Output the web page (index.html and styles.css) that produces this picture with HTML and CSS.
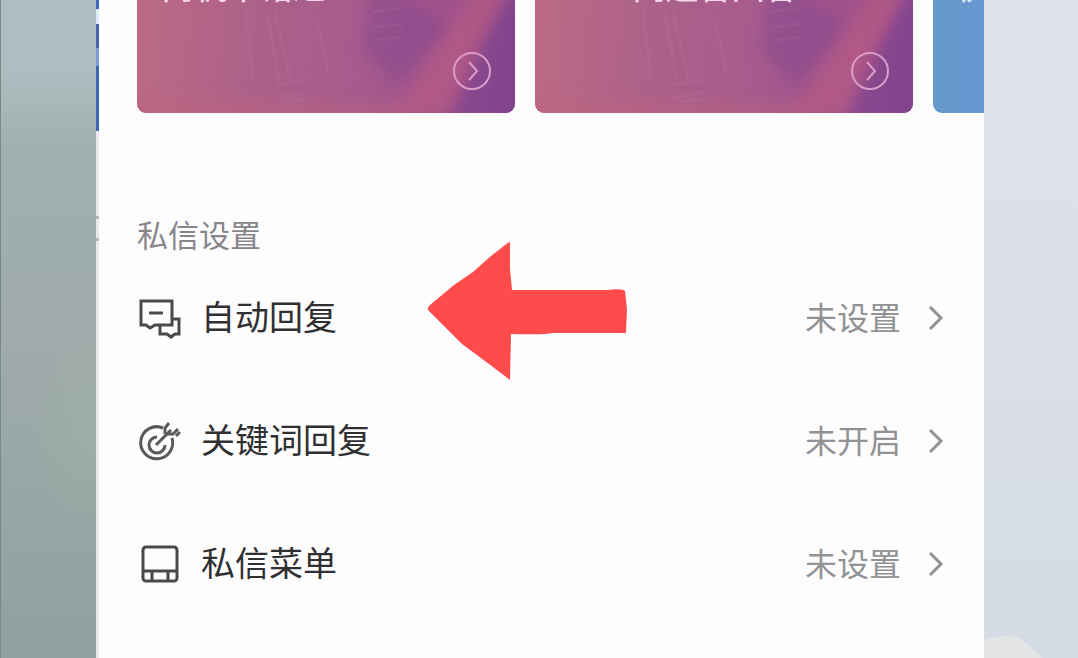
FILE: index.html
```html
<!doctype html>
<html lang="zh-CN">

<head>
    <title>私信设置</title>
    <meta charset="utf-8">
    <meta name="viewport" content="width=device-width, initial-scale=1">
    <link rel="stylesheet" href="styles.css">
</head>

<body>
    <svg width="0" height="0" class="defs" aria-hidden="true">
        <defs>
            <filter id="soft">
                <feGaussianBlur stdDeviation="7" />
            </filter>
            <filter id="soft-line">
                <feGaussianBlur stdDeviation="1" />
            </filter>
            <symbol id="art" viewBox="0 0 378 113" preserveAspectRatio="none">
                <g filter="url(#soft)">
                    <path d="M235 -20 L325 -10 L310 20 L262 85 L225 50 Z" fill="#85458f" opacity=".5" />
                    <path d="M240 -20 L330 -20 L312 25 Z" fill="#a8548a" opacity=".7" />
                    <path d="M335 -10 L372 -10 L345 40 L308 118 L252 118 L290 62 Z" fill="#b75a85" opacity=".8" />
                    <path d="M366 0 L400 -10 L400 130 L308 130 L335 80 Z" fill="#7d428d" opacity=".6" />
                    <path d="M-10 98 L270 104 L270 130 L-10 130 Z" fill="#be6380" opacity=".5" />
                </g>
                <g fill="none" stroke="#c587a8" stroke-width="2" opacity=".25" filter="url(#soft-line)">
                    <path d="M108 8 L116 80 M130 12 L142 82 M138 12 L154 82 M180 20 L192 76" />
                    <path d="M138 85 L170 80 M138 98 L170 92 M146 102 L174 98" />
                    <path d="M235 12 L263 8 M238 27 L266 24 M240 40 L264 37" />
                </g>
            </symbol>
            <symbol id="circle-arrow" viewBox="0 0 38 38">
                <circle cx="19" cy="19" r="18" />
                <path d="M16 10 L24 19 L16 28" />
            </symbol>
            <symbol id="chevron" viewBox="0 0 16 26">
                <path d="M2 2 L13 13 L2 24" />
            </symbol>
        </defs>
    </svg>

    <div class="page">
        <div class="side left"></div>

        <main class="panel">
            <div class="cards">
                <a href="#" class="card">
                    <svg class="art"><use href="#art" /></svg>
                    <span class="title">商机不错过</span>
                    <svg class="go"><use href="#circle-arrow" /></svg>
                </a>
                <a href="#" class="card">
                    <svg class="art"><use href="#art" /></svg>
                    <span class="title">7x24问题智回答</span>
                    <svg class="go"><use href="#circle-arrow" /></svg>
                </a>
                <a href="#" class="card blue">
                    <span class="title">快捷</span>
                    <svg class="go"><use href="#circle-arrow" /></svg>
                </a>
            </div>

            <section class="settings">
                <h2>私信设置</h2>
                <a href="#" class="row">
                    <svg class="icon" viewBox="-1 0 44 44">
                        <path d="M3 5 H34 V29 H17 L12 32 L8 29 H3 Z" />
                        <path d="M11 17 H25" />
                        <path d="M34 23 H41 V38 H37 L33 41 L29 38 H22 V30" />
                    </svg>
                    <span class="label">自动回复</span>
                    <span class="status">未设置</span>
                    <svg class="chevron"><use href="#chevron" /></svg>
                </a>
                <a href="#" class="row">
                    <svg class="icon target" viewBox="-1 0 44 44">
                        <path d="M25 9 A16 16 0 1 0 34 19" />
                        <path d="M19 18 A8 8 0 1 0 27 26" />
                        <path d="M18 26 L33 11" />
                        <path d="M27 15 V9 L31 4 M29 15 H35 L40 10" />
                        <path d="M38 17 L42 13" />
                    </svg>
                    <span class="label">关键词回复</span>
                    <span class="status">未开启</span>
                    <svg class="chevron"><use href="#chevron" /></svg>
                </a>
                <a href="#" class="row">
                    <svg class="icon" viewBox="-1 0 44 44">
                        <rect x="5" y="5" width="34" height="34" rx="3" />
                        <path d="M5 29 H39 M14 29 V39 M30 29 V39" />
                    </svg>
                    <span class="label">私信菜单</span>
                    <span class="status">未设置</span>
                    <svg class="chevron"><use href="#chevron" /></svg>
                </a>

                <!-- pointer to the auto reply row -->
                <svg class="pointer" viewBox="0 0 202 140">
                    <path d="M1 69 Q0 67 3 64 L27 44 L46 31 L64 15 L82 1 L83 2 L83 28 L85 49 L180 49 Q196 47 198 50 L200 68 L199 91 Q199 93 196 92 L126 92 Q118 94 84 93 L83 139 L62 123 L35 103 Z" />
                </svg>
            </section>
        </main>

        <div class="side right">
            <svg class="cloud" viewBox="0 0 94 26" preserveAspectRatio="none">
                <path d="M0 8 Q12 4 24 3 Q34 3 44 13 L58 26 H0 Z" />
            </svg>
        </div>
    </div>
</body>

</html>
```
FILE: styles.css
```css
* {
    box-sizing: border-box;
}

body {
    margin: 0;
    background: #fdfdfe;
    font-family: "Noto Sans CJK SC", "Noto Sans", sans-serif;
}

a {
    color: inherit;
    text-decoration: none;
}

svg {
    flex: none;
}

.defs {
    position: absolute;
}

.page {
    display: grid;
    grid-template-columns: 96px 1fr 94px;
    min-height: 100vh;
}

.left {
    border-left: 1px solid #78898a;
    background: radial-gradient(ellipse 60px 100px at 90px 430px, rgba(163, 177, 168, .6), transparent),
        linear-gradient(#adbdc1 0, #aebdc0 70px, #a0aeae 150px, #9facab 320px, #98a6a5 480px, #919f9e 100%);
}

.right {
    display: flex;
    align-items: flex-end;
    background: linear-gradient(#dee2ed, #dadfea 50%, #d4dbe5);
}

.cloud {
    width: 100%;
    height: 26px;
    fill: #e2e4e5;
}

/* the left edge shows a thin slice of the screen beside it */
.panel {
    min-width: 0;
    overflow: hidden;
    background: linear-gradient(#3f68b8 0 9px, #dcecff 9px 24px, #4a60b0 24px 48px, #7d9ad8 48px 66px, #3c69b4 66px 131px, #ece8ef 131px 216px, #b9b6ba 216px 219px, #ece8ef 219px 238px, #b9b6ba 238px 241px, #ece8ef 241px) left top / 3px 100% no-repeat, #fdfdfe;
}

.cards {
    display: flex;
    align-items: flex-end;
    gap: 20px;
    height: 113px;
    padding-left: 41px;
    overflow: hidden;
}

.card {
    position: relative;
    display: flex;
    flex: none;
    flex-direction: column;
    gap: 47px;
    width: 378px;
    padding: 23px 24px;
    border-radius: 9px;
    overflow: hidden;
    color: #f3d5e6;
    background: linear-gradient(95deg, #bd6b84, #ab608a 35%, #a65b8d 60%, #8b458d);
}

.card.blue {
    color: #d3e9fa;
    background: linear-gradient(90deg, #659acb, #6796d2 60px);
}

.art {
    position: absolute;
    left: 0;
    bottom: 0;
    width: 100%;
    height: 113px;
}

.title {
    position: relative;
    font-size: 33px;
    font-weight: 500;
    line-height: 40px;
    white-space: nowrap;
}

.go {
    position: relative;
    align-self: flex-end;
    width: 38px;
    height: 38px;
    fill: none;
    stroke: #dc9cc8;
    stroke-width: 2;
}

.settings {
    position: relative;
    padding: 97px 40px 0 41px;
}

h2 {
    margin: 0;
    color: #88868a;
    font-size: 31px;
    font-weight: 400;
    line-height: 48px;
}

.row {
    display: flex;
    align-items: center;
    height: 123px;
}

.row:first-of-type {
    margin-top: -2px;
}

.icon {
    width: 44px;
    height: 44px;
    margin-right: 20px;
    fill: none;
    stroke: #4a4a4c;
    stroke-width: 3;
}

.icon.target {
    stroke: #59595b;
}

.label,
.status {
    padding-bottom: 3px;
    line-height: 48px;
}

.label {
    flex: 1;
    color: #303032;
    font-size: 34px;
}

.status {
    color: #929194;
    font-size: 32px;
}

.chevron {
    width: 16px;
    height: 26px;
    margin-left: 27px;
    fill: none;
    stroke: #929194;
    stroke-width: 3;
}

.pointer {
    position: absolute;
    top: 128px;
    left: 331px;
    width: 202px;
    height: 140px;
    fill: #ff4b4b;
}
```
